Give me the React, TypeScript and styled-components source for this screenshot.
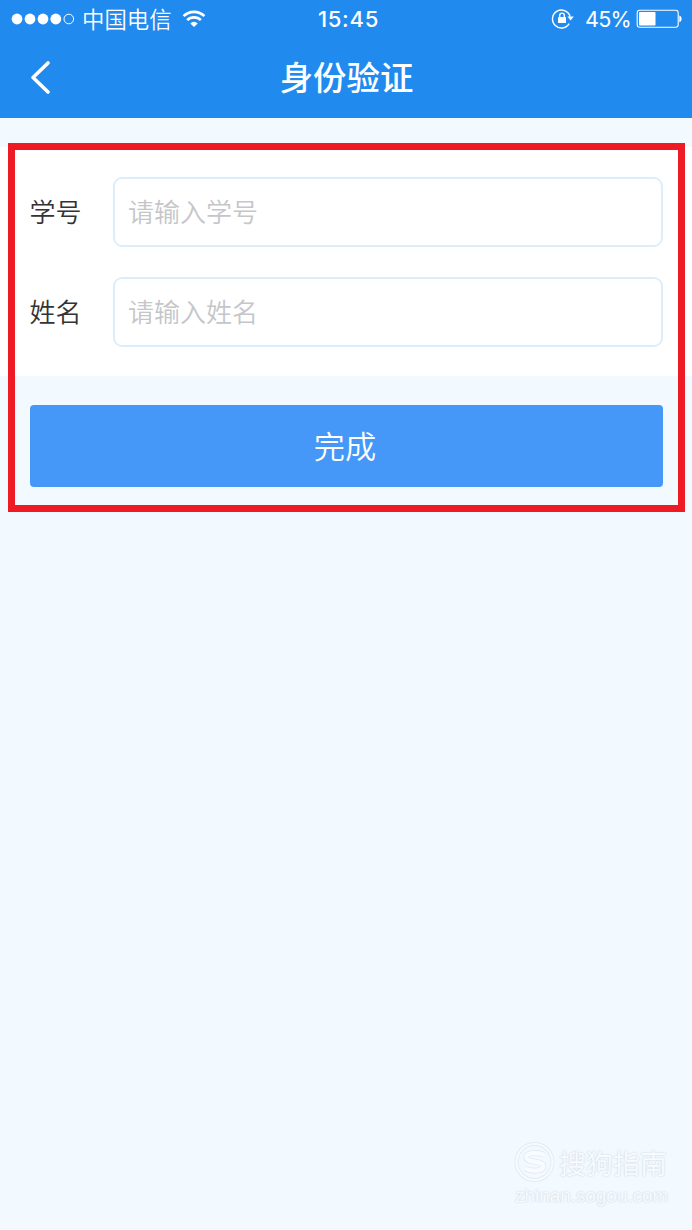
import React from 'react';
import styled, { createGlobalStyle } from 'styled-components';

const GlobalStyle = createGlobalStyle`
  *, *::before, *::after { box-sizing: border-box; }
  body { margin: 0; background: #f2f9ff; }
`;

const Screen = styled.div`
  position: relative;
  width: 692px;
  height: 1230px;
  overflow: hidden;
  background: #f2f9ff;
  font-family: Inter, 'Noto Sans CJK SC', sans-serif;
`;

const TopBar = styled.header`
  height: 118px;
  background: #218aef;
  color: #fff;
`;

const StatusBar = styled.div`
  display: grid;
  grid-template-columns: 1fr auto 1fr;
  align-items: center;
  height: 38px;
  padding: 0 10px 0 11px;
`;

const StatusGroup = styled.div<{ $end?: boolean }>`
  display: flex;
  align-items: center;
  height: 38px;
  justify-content: ${(p) => (p.$end ? 'flex-end' : 'flex-start')};
`;

const Carrier = styled.span`
  margin: 0 10px 0 7px;
  padding-top: 2px;
  font-size: 22.4px;
  line-height: 36px;
  font-weight: 350;
`;

const Clock = styled.span`
  position: relative;
  left: 2px;
  font-size: 22px;
  font-weight: 500;
  letter-spacing: 0.75px;
  line-height: 38px;
`;

const Percent = styled.span`
  margin: 0 5px 0 11px;
  font-size: 21.6px;
  letter-spacing: -0.8px;
  line-height: 38px;
`;

const NavBar = styled.div`
  display: grid;
  grid-template-columns: 80px 1fr 80px;
  align-items: center;
  height: 80px;
`;

const BackButton = styled.button`
  display: flex;
  height: 80px;
  padding: 21px 0 0 29px;
  border: 0;
  background: none;
`;

const Title = styled.h1`
  margin: 0;
  padding-left: 1px;
  text-align: center;
  font-size: 33.4px;
  font-weight: 500;
  line-height: 80px;
  height: 80px;
`;

const Panel = styled.section`
  display: flex;
  flex-direction: column;
  gap: 30px;
  margin-top: 29px;
  height: 229px;
  padding: 30px 29px 0 29.5px;
  background: #fff;
`;

const Field = styled.label`
  display: flex;
  align-items: center;
  height: 70px;
`;

const FieldName = styled.span`
  width: 83px;
  padding-top: 2px;
  font-size: 26px;
  line-height: 68px;
  font-weight: 350;
  color: #333;
`;

const TextInput = styled.input`
  flex: 1;
  min-width: 0;
  height: 70px;
  padding: 0 13.5px;
  border: 2px solid #dceefb;
  border-radius: 9px;
  outline: 0;
  background: #fff;
  font: 350 26px Inter, 'Noto Sans CJK SC', sans-serif;
  color: #444;
  &::placeholder { color: #c5c6ca; opacity: 1; }
`;

const SubmitButton = styled.button`
  display: block;
  width: 633px;
  height: 82px;
  margin: 29px 0 0 29.5px;
  padding: 2px 2px 0 0;
  border: 0;
  border-radius: 4px;
  background: #4597f8;
  color: #fff;
  font: 350 31.2px/80px Inter, 'Noto Sans CJK SC', sans-serif;
`;

const Highlight = styled.div`
  position: absolute;
  left: 8px;
  top: 143px;
  width: 677px;
  height: 369px;
  border: 7px solid #ee1b24;
  pointer-events: none;
`;

const Watermark = styled.div`
  position: absolute;
  left: 514px;
  top: 1141px;
  width: 160px;
  color: #f7fbff;
  text-shadow: 0 0 2px #cdd5dc, 0 0 1px #dbe2e8;
`;

const WatermarkBrand = styled.div`
  display: flex;
  align-items: center;
  gap: 4px;
  height: 42px;
  font-size: 27px;
  white-space: nowrap;
`;

const WatermarkSite = styled.div`
  padding-left: 1px;
  font: 400 18.9px/26px 'Liberation Sans', sans-serif;
`;

const SignalDots = () => (
  <svg width="64" height="14" viewBox="0 0 64 14" fill="#fff">
    {[6, 19, 32, 44.8].map((x) => (
      <circle key={x} cx={x} cy="7" r="5.4" />
    ))}
    <circle cx="57.8" cy="7" r="4.8" fill="none" stroke="#fff" strokeWidth="1" />
  </svg>
);

const WifiIcon = () => (
  <svg width="24" height="18" viewBox="0 0 24 18" fill="none" stroke="#fff" strokeWidth="2.7">
    <path d="M1.6 6.1 A15 15 0 0 1 22.4 6.1" />
    <path d="M5.2 10.1 A9.6 9.6 0 0 1 18.8 10.1" />
    <path d="M8.3 13.4 A5.2 5.2 0 0 1 15.7 13.4 L12 17 Z" fill="#fff" stroke="none" />
  </svg>
);

const RotationLock = () => (
  <svg width="23" height="22" viewBox="0 0 23 22" fill="none" stroke="#fff" strokeWidth="1.4">
    <path d="M18.2 15.7 A9 9 0 1 1 19.2 8.8" />
    <path d="M16.4 8.6 H22.8 L19.6 12.6 Z" fill="#fff" stroke="none" />
    <rect x="7" y="8.9" width="8" height="6.2" rx="0.6" fill="#fff" stroke="none" />
    <path d="M8.7 9.4 V7.4 A2.3 2.3 0 0 1 13.3 7.4 V9.4" />
  </svg>
);

const Battery = () => (
  <svg width="46" height="20" viewBox="0 0 46 20">
    <rect x="1.2" y="1.3" width="41" height="17" rx="2.5" fill="none" stroke="#fff" strokeWidth="1.1" />
    <rect x="3" y="3.1" width="16.5" height="13.4" rx="0.8" fill="#fff" />
    <path d="M43.3 6.6 C46.3 7.6 46.3 12.2 43.3 13.2 Z" fill="#fff" />
  </svg>
);

const emblemCurve = 'M30 13.8 C21 10.2 12 12 12.3 16.6 C12.8 21.6 29 19.6 29.2 25 C29.3 30.4 18 31 10.5 27.4';

const BrandMark = () => (
  <svg width="41" height="42" viewBox="0 0 41 42" fill="none">
    <g stroke="#e4ebf1">
      <circle cx="20.5" cy="21" r="18" strokeWidth="4" />
      <path d={emblemCurve} strokeWidth="6" />
    </g>
    <g stroke="#f8fbff">
      <circle cx="20.5" cy="21" r="18" strokeWidth="2.2" />
      <path d={emblemCurve} strokeWidth="4.2" />
    </g>
  </svg>
);

const fields = ['学号', '姓名'];

export default function App() {
  return (
    <Screen>
      <GlobalStyle />
      <TopBar>
        <StatusBar>
          <StatusGroup>
            <SignalDots />
            <Carrier>中国电信</Carrier>
            <WifiIcon />
          </StatusGroup>
          <Clock>15:45</Clock>
          <StatusGroup $end>
            <RotationLock />
            <Percent>45%</Percent>
            <Battery />
          </StatusGroup>
        </StatusBar>
        <NavBar>
          <BackButton aria-label="返回">
            <svg width="22" height="36" viewBox="0 0 22 36" fill="none" stroke="#fff" strokeWidth="3.6" strokeLinecap="round" strokeLinejoin="round">
              <path d="M19 4 L4 18.5 L19 33" />
            </svg>
          </BackButton>
          <Title>身份验证</Title>
        </NavBar>
      </TopBar>
      <Panel>
        {fields.map((name) => (
          <Field key={name}>
            <FieldName>{name}</FieldName>
            <TextInput placeholder={`请输入${name}`} />
          </Field>
        ))}
      </Panel>
      <SubmitButton>完成</SubmitButton>
      <Highlight />
      <Watermark>
        <WatermarkBrand>
          <BrandMark />
          搜狗指南
        </WatermarkBrand>
        <WatermarkSite>zhinan.sogou.com</WatermarkSite>
      </Watermark>
    </Screen>
  );
}
